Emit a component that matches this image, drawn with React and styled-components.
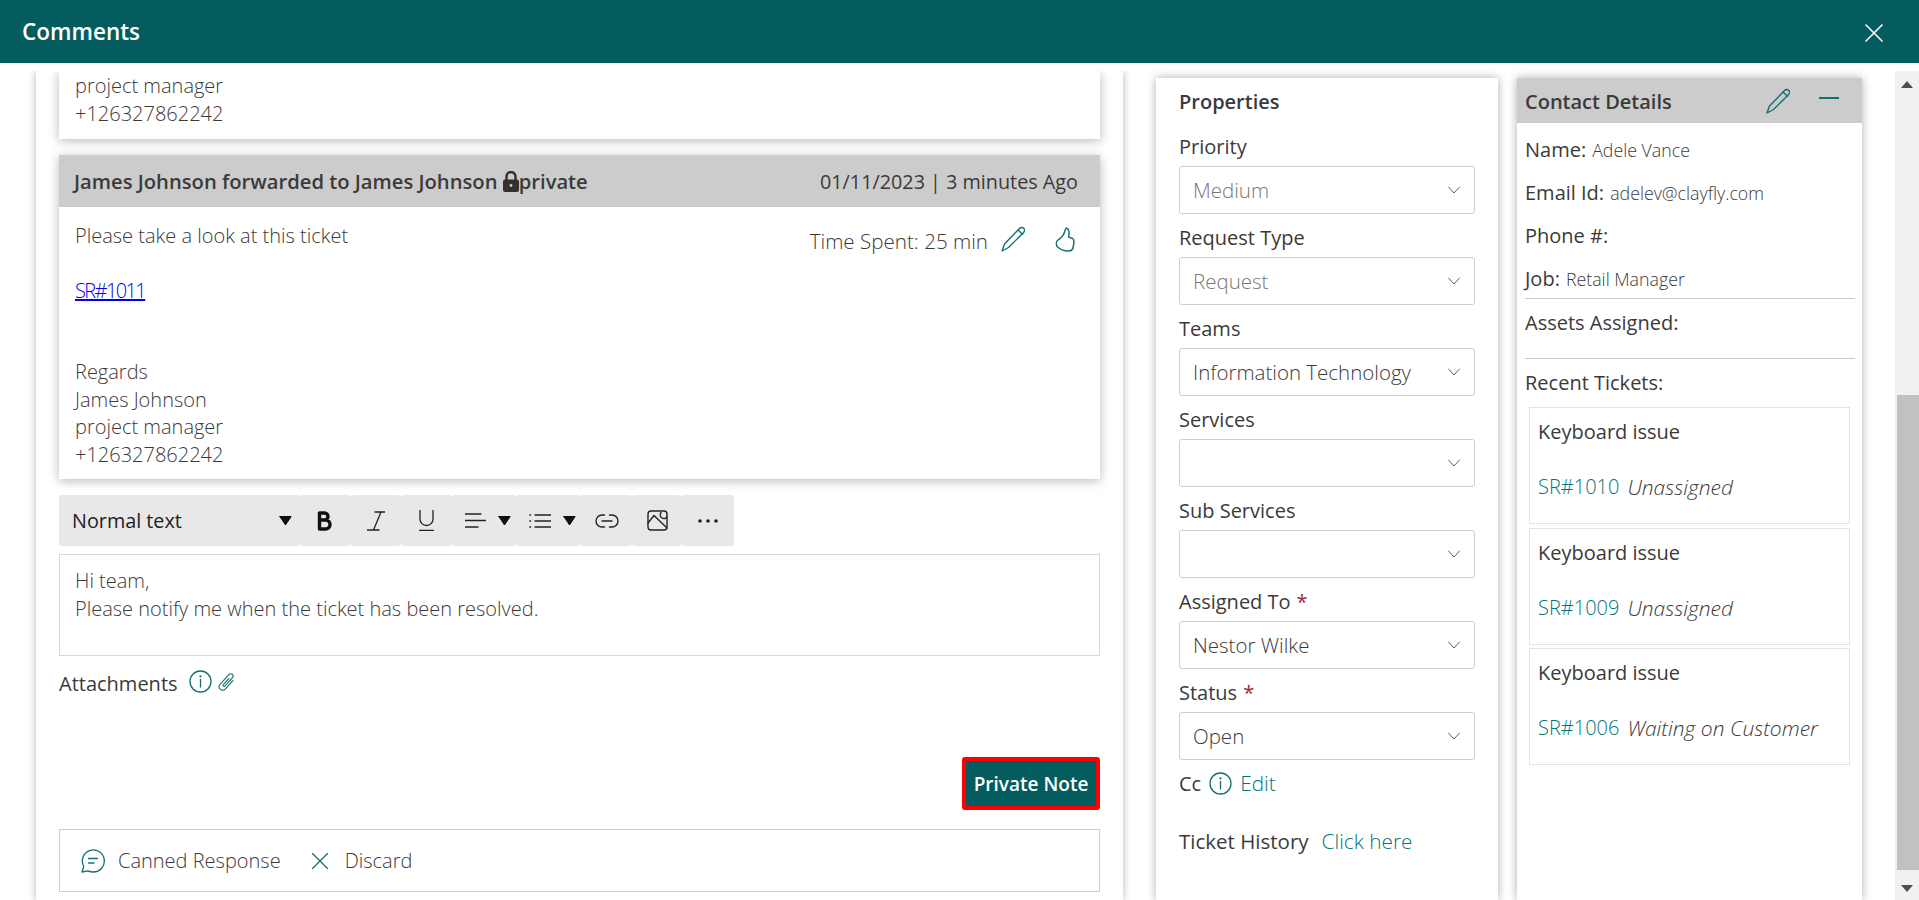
import React from 'react';
import styled, { createGlobalStyle } from 'styled-components';

const TEAL = '#045c5f';
const ICON = '#14706f';
const LINK = '#017578';
const TEXT = '#3b3a39';

const GlobalStyle = createGlobalStyle`
	html, body {
		margin: 0;
		height: 100%;
		overflow: hidden;
		background: white;
	}
	body {
		font-family: 'Open Sans', 'Noto Sans', sans-serif;
		color: ${TEXT};
	}
`;

const Svg = ({ size = 24, w, h, box = '0 0 24 24', sw = 1.3, color = ICON, fill = 'none', children }) => (
	<svg
		width={w || size}
		height={h || size}
		viewBox={box}
		fill={fill}
		stroke={color}
		strokeWidth={sw}
		strokeLinecap="round"
		strokeLinejoin="round"
		style={{ display: 'block', flexShrink: 0 }}
	>
		{children}
	</svg>
);

const PencilIcon = () => (
	<Svg w={24} h={26} box="0 0 24 26" sw={1.4}>
		<path d="M1 25l2.500-7L18 3c1.500-1.800 3.500-2 4.700-.7C24 3.500 23.800 5.500 22.200 7L7.500 21.500 1 25Z" />
		<path d="M17 4l4.500 4.200" />
	</Svg>
);
const ThumbIcon = () => (
	<Svg w={20} h={25} box="0 0 20 25" sw={1.5}>
		<path d="M11.500 1C10.500 1 9.800 4 9 6.500 8 9.500 5 11.500 3 13c-2 1.500-2.200 4.500-.5 7 2.500 2 6.500 4 10.500 4 3 0 4.500-1 5-3 .5-3 1.500-6 .5-8.500-1-2-3.500-1.500-5-2.500 1-3 1-8-2-9Z" />
	</Svg>
);
const ChevronIcon = () => (
	<Svg size={14} box="0 0 14 14" sw={1} color="#605e5c">
		<path d="M1.500 4 7 10l5.500-6" />
	</Svg>
);
const InfoIcon = () => (
	<Svg size={23} box="0 0 23 23" sw={1.300}>
		<circle cx="11.500" cy="11.500" r="10.500" />
		<path d="M11.500 9.500v7.500" />
		<circle cx="11.500" cy="6.300" r=".5" />
	</Svg>
);
const ClipIcon = () => (
	<Svg w={18} h={20} box="0 0 18 20" sw={1.100}>
		<g transform="rotate(42 9 10)">
			<path d="M12.500 5v11.500a3.500 3.500 0 0 1-7 0V3a2.300 2.300 0 0 1 4.600 0v11.500a1 1 0 0 1-2 0V6" />
		</g>
	</Svg>
);
const CaretIcon = () => (
	<Svg size={13} box="0 0 13 13" sw={1} color="#111" fill="#111">
		<path d="M.8 2.500h11.400L6.500 11 .8 2.500Z" />
	</Svg>
);

const Page = styled.div`
	height: 900px;
	display: flex;
	flex-direction: column;
	overflow: hidden;
`;
const TopBar = styled.header`
	height: 63px;
	flex-shrink: 0;
	background: ${TEAL};
	color: white;
	display: flex;
	align-items: center;
	justify-content: space-between;
	padding: 2px 36px 0 22px;
	box-sizing: border-box;
`;
const Title = styled.h1`
	margin: 0 0 2px;
	font-size: 22.500px;
	font-weight: 600;
`;
const Content = styled.div`
	flex: 1;
	display: flex;
	padding-top: 8px;
	min-height: 0;
`;
const MainPanel = styled.main`
	width: 1087px;
	margin-left: 36px;
	padding: 0 23px;
	box-sizing: border-box;
	box-shadow: 0 0 8px rgba(0, 0, 0, 0.3);
	clip-path: inset(0 -12px 0 -12px);
`;
const Card = styled.section`
	background: white;
	box-shadow: 0 2px 10px rgba(0, 0, 0, 0.28);
	clip-path: inset(${props => (props.$clipped ? '0' : '-14px')} -14px -14px -14px);
	margin-bottom: 16px;
`;
const CardHeader = styled.div`
	height: 52px;
	background: #cccccc;
	display: flex;
	align-items: center;
	justify-content: space-between;
	padding: 0 22px 0 15px;
	font-size: 19.800px;
`;
const CardAuthor = styled.div`
	display: flex;
	align-items: center;
	font-size: 20.200px;
	font-weight: 600;
`;
const CardBody = styled.div`
	position: relative;
	padding: ${props => props.$pad || '15px'};
	font-size: 20px;
	line-height: 27.500px;
	font-weight: 300;
`;
const Line = styled.div`
	height: 27.500px;
	margin-bottom: ${props => props.$gap || 0}px;
`;
const MailLink = styled.a`
	color: #0000ee;
	text-decoration: underline;
	letter-spacing: -1.600px;
`;
const CardMeta = styled.div`
	position: absolute;
	top: 16px;
	right: 25px;
	display: flex;
	align-items: center;
	gap: 13px;
	font-size: 20.600px;
`;
const MetaText = styled.span`
	margin-top: 5px;
`;
const ThumbWrap = styled.span`
	margin-left: 17px;
`;
const Toolbar = styled.div`
	display: flex;
	width: 675px;
	height: 51px;
	margin-top: 16px;
`;
const ToolButton = styled.div`
	width: ${props => props.$w}px;
	background: #e8e8e8;
	border-radius: 3px;
	display: flex;
	align-items: center;
	justify-content: center;
	box-sizing: border-box;
`;
const StyleSelect = styled(ToolButton)`
	justify-content: space-between;
	padding: 0 7px 0 13px;
	font-size: 19.800px;
	font-weight: 400;
	color: #222;
`;
const MenuButton = styled(ToolButton)`
	justify-content: flex-start;
	padding-left: 13px;
	gap: 12px;
`;
const Editor = styled.div`
	margin-top: 8px;
	height: 102px;
	box-sizing: border-box;
	border: 1px solid #d8d8d8;
	padding: 12px 15px;
	font-size: 20px;
	font-weight: 300;
	line-height: 27.500px;
`;
const AttachRow = styled.div`
	display: flex;
	align-items: center;
	margin-top: 12px;
	height: 30px;
	font-size: 20px;
	gap: 11px;
`;
const AttachIcons = styled.div`
	display: flex;
	align-items: center;
	gap: 6px;
	margin-top: -3px;
`;
const ActionRow = styled.div`
	display: flex;
	justify-content: flex-end;
	margin-top: 59px;
`;
const PrimaryButton = styled.button`
	width: 138px;
	height: 53px;
	background: ${TEAL};
	color: white;
	border: 4px solid #ff0000;
	border-radius: 3px;
	font-family: inherit;
	font-size: 19px;
	font-weight: 600;
	padding: 0;
`;
const FooterBar = styled.div`
	margin-top: 19px;
	height: 63px;
	box-sizing: border-box;
	border: 1px solid #cccccc;
	display: flex;
	align-items: center;
	padding: 0 21px;
	font-size: 20px;
	font-weight: 300;
`;
const FooterItem = styled.div`
	display: flex;
	align-items: center;
	gap: ${props => props.$gap}px;
	margin-right: 31px;
`;
const SidePanel = styled.aside`
	flex-shrink: 0;
	width: ${props => props.$w}px;
	margin-left: ${props => props.$ml}px;
	margin-top: 7px;
	background: white;
	box-sizing: border-box;
	box-shadow: 0 0 9px rgba(0, 0, 0, 0.32);
`;
const PropsInner = styled.div`
	padding: 11px 23px 0;
`;
const PropsTitle = styled.div`
	font-size: 20px;
	font-weight: 600;
	line-height: 26px;
	margin-bottom: 19px;
`;
const Field = styled.div`
	height: 91px;
`;
const Label = styled.div`
	font-size: 20px;
	line-height: 26px;
	height: 32px;
`;
const Star = styled.span`
	color: #a4262c;
	margin-left: 6px;
`;
const SelectBox = styled.div`
	height: 48px;
	box-sizing: border-box;
	border: 1px solid #cfcfcf;
	border-radius: 3px;
	display: flex;
	align-items: center;
	justify-content: space-between;
	padding: 0 13px;
	font-size: 20.500px;
	font-weight: 300;
	color: ${props => (props.$muted ? '#777' : TEXT)};
`;
const InlineRow = styled.div`
	display: flex;
	align-items: center;
	gap: ${props => props.$gap || 8}px;
	margin-top: ${props => props.$mt || 0}px;
	height: 30px;
	font-size: ${props => props.$size || 20}px;
`;
const TealLink = styled.a`
	color: ${LINK};
	font-weight: 300;
	font-size: ${props => props.$size || 20}px;
`;
const ContactHeader = styled.div`
	height: 45px;
	background: #cccccc;
	display: flex;
	align-items: center;
	padding: 0 23px 0 8px;
`;
const ContactTitle = styled.div`
	flex: 1;
	font-size: 20px;
	font-weight: 600;
	margin-top: 2px;
`;
const MinusIcon = styled.span`
	display: block;
	width: 20px;
	height: 2px;
	background: ${ICON};
	margin: -6px 0 0 29px;
`;
const ContactBody = styled.div`
	padding: 5px 7px 0 8px;
`;
const InfoRow = styled.div`
	height: 43px;
	display: flex;
	align-items: center;
	font-size: 20px;
	gap: 6px;
`;
const InfoValue = styled.span`
	font-size: 17.800px;
	font-weight: 300;
`;
const Divider = styled.hr`
	border: 0;
	border-top: 1px solid #c8c8c8;
	margin: ${props => props.$m || '0'};
`;
const TicketList = styled.div`
	margin-top: 3px;
`;
const TicketCard = styled.div`
	box-sizing: border-box;
	height: 117px;
	margin: 0 5px 3.500px 4px;
	border: 1px solid #e3e3e3;
	padding: 11px 8px;
	font-size: 20px;
`;
const TicketTitle = styled.div`
	line-height: 26px;
	margin-bottom: 29px;
`;
const TicketMeta = styled.div`
	display: flex;
	gap: 8px;
	line-height: 26px;
`;
const TicketStatus = styled.em`
	font-size: 21px;
	font-style: italic;
	font-weight: 300;
`;
const Scrollbar = styled.div`
	margin-left: 33px;
	width: 24px;
	background: #f1f1f1;
	display: flex;
	flex-direction: column;
	align-items: flex-end;
`;
const ScrollArrow = styled.div`
	height: ${props => props.$h}px;
	box-sizing: border-box;
	padding-top: ${props => props.$pt}px;
	width: 24px;
	display: flex;
	justify-content: center;
`;
const ScrollTrack = styled.div`
	flex: 1;
	width: 22px;
	display: flex;
	flex-direction: column;
	padding-top: 298px;
`;
const ScrollThumb = styled.div`
	flex: 1;
	background: #c1c1c1;
`;

const fields = [
	{ label: 'Priority', value: 'Medium', muted: true },
	{ label: 'Request Type', value: 'Request', muted: true },
	{ label: 'Teams', value: 'Information Technology' },
	{ label: 'Services', value: '' },
	{ label: 'Sub Services', value: '' },
	{ label: 'Assigned To', value: 'Nestor Wilke', required: true },
	{ label: 'Status', value: 'Open', required: true },
];

const tickets = [
	{ id: 'SR#1010', status: 'Unassigned' },
	{ id: 'SR#1009', status: 'Unassigned' },
	{ id: 'SR#1006', status: 'Waiting on Customer' },
];

const App = () => {
	return (
		<>
			<GlobalStyle />
			<Page>
				<TopBar>
					<Title>Comments</Title>
					<Svg size={18} box="0 0 18 18" color="white" sw={1.6}>
						<path d="M1 1l16 16M17 1 1 17" />
					</Svg>
				</TopBar>
				<Content>
					<MainPanel>
						<Card $clipped>
							<CardBody $pad="1px 16px 12px">
								<Line>project manager</Line>
								<Line>+126327862242</Line>
							</CardBody>
						</Card>
						<Card>
							<CardHeader>
								<CardAuthor>
									James Johnson forwarded to James Johnson&nbsp;
									<Svg w={16} h={21} box="0 0 16 21" color="#323130" fill="#323130" sw={0}>
										<rect x="0" y="8.500" width="16" height="12.500" rx="2" />
										<path fill="none" stroke="#323130" strokeWidth="2.400" d="M3.500 9V5.500a4.500 4.500 0 0 1 9 0V9" />
										<circle cx="8" cy="14.500" r="1.400" fill="#cccccc" />
									</Svg>
									private
								</CardAuthor>
								<div>01/11/2023 | 3 minutes Ago</div>
							</CardHeader>
							<CardBody $pad="15px 16px 11px">
								<CardMeta>
									<MetaText>Time Spent: 25 min</MetaText>
									<PencilIcon />
									<ThumbWrap>
										<ThumbIcon />
									</ThumbWrap>
								</CardMeta>
								<Line $gap={27}>Please take a look at this ticket</Line>
								<Line $gap={54}>
									<MailLink>SR#1011</MailLink>
								</Line>
								<Line>Regards</Line>
								<Line>James Johnson</Line>
								<Line>project manager</Line>
								<Line>+126327862242</Line>
							</CardBody>
						</Card>
						<Toolbar>
							<StyleSelect $w={240}>
								Normal text <CaretIcon />
							</StyleSelect>
							<ToolButton $w={51}>
								<Svg w={15} h={20} box="0 0 15 20" color="#111" sw={3.400}>
									<path d="M2.500 2v16h6a4.500 4.500 0 0 0 0-9h-6 5a3.500 3.500 0 0 0 0-7h-5Z" />
								</Svg>
							</ToolButton>
							<ToolButton $w={51}>
								<Svg w={18} h={20} box="0 0 18 20" color="#222" sw={1.300}>
									<path d="M8 1h10M0 19h12M14 1 6.500 19" />
								</Svg>
							</ToolButton>
							<ToolButton $w={51}>
								<Svg w={15} h={21} box="0 0 15 21" color="#222" sw={1.300}>
									<path d="M1 .5V9a6.500 6.500 0 0 0 13 0V.5M.5 20.500h14" />
								</Svg>
							</ToolButton>
							<MenuButton $w={64}>
								<Svg w={21} h={15} box="0 0 21 15" color="#222" sw={1.300}>
									<path d="M0 1h16M0 7.500h21M0 14h13" />
								</Svg>
								<CaretIcon />
							</MenuButton>
							<MenuButton $w={65}>
								<Svg w={22} h={14} box="0 0 22 14" color="#222" sw={1.300}>
									<path d="M6 1h16M6 7h16M6 13h16M.8 1h.8M.8 7h.8M.8 13h.8" />
								</Svg>
								<CaretIcon />
							</MenuButton>
							<ToolButton $w={51}>
								<Svg w={24} h={14} box="0 0 24 14" color="#222" sw={1.400}>
									<path d="M9.500 1H7a6 6 0 0 0 0 12h2.500M14.500 1H17a6 6 0 0 1 0 12h-2.500M7 7h10" />
								</Svg>
							</ToolButton>
							<ToolButton $w={50}>
								<Svg size={21} box="0 0 21 21" color="#222" sw={1.400}>
									<rect x="1" y="1" width="19" height="19" rx="3" />
									<path d="M1 13l6-7.500 13 12.500M20 7a3.300 3.300 0 0 1-6-4.500" />
								</Svg>
							</ToolButton>
							<ToolButton $w={52}>
								<Svg w={20} h={4} box="0 0 20 4" color="#222" fill="#222" sw={0}>
									<circle cx="2" cy="2" r="1.800" />
									<circle cx="10" cy="2" r="1.800" />
									<circle cx="18" cy="2" r="1.800" />
								</Svg>
							</ToolButton>
						</Toolbar>
						<Editor>
							<div>Hi team,</div>
							<div>Please notify me when the ticket has been resolved.</div>
						</Editor>
						<AttachRow>
							Attachments
							<AttachIcons>
								<InfoIcon />
								<ClipIcon />
							</AttachIcons>
						</AttachRow>
						<ActionRow>
							<PrimaryButton>Private Note</PrimaryButton>
						</ActionRow>
						<FooterBar>
							<FooterItem $gap={13}>
								<Svg size={24} sw={1.300}>
									<path d="M1 23l1.800-5.500A11 11 0 1 1 12 23a11 11 0 0 1-5-1.200L1 23Z" />
									<path d="M7.500 9.500h9M7.500 14h5.500" />
								</Svg>
								Canned Response
							</FooterItem>
							<FooterItem $gap={17}>
								<Svg size={16} box="0 0 16 16" sw={1.300}>
									<path d="M.5.5l15 15M15.500.5l-15 15" />
								</Svg>
								Discard
							</FooterItem>
						</FooterBar>
					</MainPanel>
					<SidePanel $w={342} $ml={33}>
						<PropsInner>
							<PropsTitle>Properties</PropsTitle>
							{fields.map(field => (
								<Field key={field.label}>
									<Label>
										{field.label}
										{field.required && <Star>*</Star>}
									</Label>
									<SelectBox $muted={field.muted}>
										{field.value}
										<span />
										<ChevronIcon />
									</SelectBox>
								</Field>
							))}
							<InlineRow $mt={-3}>
								Cc
								<InfoIcon />
								<TealLink $size={20.800}>Edit</TealLink>
							</InlineRow>
							<InlineRow $gap={13} $mt={28} $size={20.500}>
								Ticket History
								<TealLink $size={20.800}>Click here</TealLink>
							</InlineRow>
						</PropsInner>
					</SidePanel>
					<SidePanel $w={345} $ml={19}>
						<ContactHeader>
							<ContactTitle>Contact Details</ContactTitle>
							<PencilIcon />
							<MinusIcon />
						</ContactHeader>
						<ContactBody>
							<InfoRow>
								Name: <InfoValue>Adele Vance</InfoValue>
							</InfoRow>
							<InfoRow>
								Email Id: <InfoValue>adelev@clayfly.com</InfoValue>
							</InfoRow>
							<InfoRow>Phone #:</InfoRow>
							<InfoRow>
								Job: <InfoValue>Retail Manager</InfoValue>
							</InfoRow>
							<Divider $m="-2px 0 2px" />
							<InfoRow>Assets Assigned:</InfoRow>
							<Divider $m="14px 0 2px" />
							<InfoRow>Recent Tickets:</InfoRow>
							<TicketList>
								{tickets.map(ticket => (
									<TicketCard key={ticket.id}>
										<TicketTitle>Keyboard issue</TicketTitle>
										<TicketMeta>
											<TealLink>{ticket.id}</TealLink>
											<TicketStatus>{ticket.status}</TicketStatus>
										</TicketMeta>
									</TicketCard>
								))}
							</TicketList>
						</ContactBody>
					</SidePanel>
					<Scrollbar>
						<ScrollArrow $h={26} $pt={10}>
							<Svg w={12} h={7} box="0 0 12 7" sw={0} color="none" fill="#505050">
								<path d="M6 0l6 7H0Z" />
							</Svg>
						</ScrollArrow>
						<ScrollTrack>
							<ScrollThumb />
						</ScrollTrack>
						<ScrollArrow $h={30} $pt={15}>
							<Svg w={12} h={7} box="0 0 12 7" sw={0} color="none" fill="#505050">
								<path d="M0 0h12L6 7Z" />
							</Svg>
						</ScrollArrow>
					</Scrollbar>
				</Content>
			</Page>
		</>
	);
};

export default App;
